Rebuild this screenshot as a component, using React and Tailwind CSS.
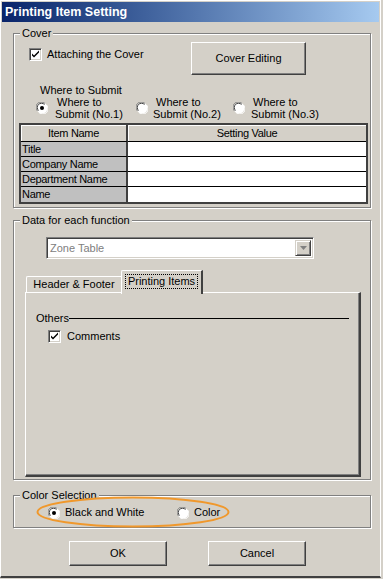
import React from 'react'

function Check({ checked }) {
  return (
    <span className="inline-block w-[13px] h-[13px] bg-white border border-t-[#808080] border-l-[#808080] border-b-white border-r-white shadow-[inset_1px_1px_0_#404040,inset_-1px_-1px_0_#d4d0c8] relative shrink-0">
      {checked && (
        <svg width="13" height="13" viewBox="0 0 13 13" className="absolute left-[-1px] top-[-1px]">
          <path d="M3 5.5 L5 7.5 L10 2.5 L10 4.5 L5 9.5 L3 7.5 Z" fill="#000" />
        </svg>
      )}
    </span>
  )
}

function Radio({ checked }) {
  return (
    <svg width="12" height="12" viewBox="0 0 12 12" className="shrink-0">
      <circle cx="6" cy="6" r="5.5" fill="#fff" />
      <path d="M1.5 9 A5 5 0 0 1 9 1.5" stroke="#808080" strokeWidth="1" fill="none" />
      <path d="M2.5 8.5 A4 4 0 0 1 8.5 2.5" stroke="#404040" strokeWidth="1" fill="none" />
      <path d="M10.5 3 A5 5 0 0 1 3 10.5" stroke="#fff" strokeWidth="1" fill="none" />
      {checked && <circle cx="6" cy="6" r="2" fill="#000" />}
    </svg>
  )
}

function Button({ children, className = '' }) {
  return (
    <div className={`flex items-center justify-center bg-[#d4d0c8] border border-t-white border-l-white border-r-[#404040] border-b-[#404040] shadow-[inset_-1px_-1px_0_#808080] text-[11px] text-black ${className}`}>
      {children}
    </div>
  )
}

function Group({ label, className = '', children }) {
  return (
    <fieldset className={`relative mx-[12px] w-[358px] border border-[#808080] shadow-[inset_1px_1px_0_#fff,1px_1px_0_#fff] ${className}`}>
      <legend className="ml-[6px] px-[2px] bg-[#d4d0c8] leading-[13px] text-[11px]">{label}</legend>
      {children}
    </fieldset>
  )
}

const rows = ['Title', 'Company Name', 'Department Name', 'Name']

export default function App() {
  return (
    <div className="w-[383px] h-[579px] bg-[#d4d0c8] overflow-hidden font-['Liberation_Sans',Arial,sans-serif] text-black">
      <div className="w-[381px] h-[578px] border-l border-l-white border-r border-r-white border-b-2 border-b-[#404040] border-t border-t-white flex flex-col">
        {/* title bar */}
        <div className="mx-[1px] mt-[1px] h-[20px] bg-gradient-to-r from-[#0a246a] to-[#a6caf0] flex items-center pl-[3px]">
          <span className="text-white font-bold text-[12.5px]">Printing Item Setting</span>
        </div>

        {/* Cover */}
        <Group label="Cover" className="mt-[5px] h-[181px]">
          <div className="flex items-start pt-[2px]">
            <label className="w-[177px] pl-[15px] mt-[4px] flex items-center gap-[5px] text-[11px]">
              <Check checked />
              <span>Attaching the Cover</span>
            </label>
            <Button className="w-[115px] h-[33px]">Cover Editing</Button>
          </div>
          <div className="pl-[26px] mt-[9px] text-[11px] leading-[12px]">Where to Submit</div>
          <div className="flex items-center text-[11px] leading-[12px]">
            <div className="ml-[22px] w-[100px] flex items-center gap-[7px]">
              <Radio checked />
              <div><div className="pl-[2px]">Where to</div><div>Submit (No.1)</div></div>
            </div>
            <div className="w-[97px] flex items-center gap-[5px]">
              <Radio />
              <div><div className="pl-[3px]">Where to</div><div>Submit (No.2)</div></div>
            </div>
            <div className="flex items-center gap-[6px]">
              <Radio />
              <div><div className="pl-[2px]">Where to</div><div>Submit (No.3)</div></div>
            </div>
          </div>
          <div className="ml-[5px] mt-[3px] w-[349px] border-2 border-[#404040] grid grid-cols-[107px_1fr] text-[11px] leading-[13px] tracking-[-0.3px]">
            <div className="h-[17px] border-r-2 border-r-[#404040] border-b border-b-black bg-[#d4d0c8] shadow-[inset_1px_1px_0_#fff] flex items-center justify-center">Item Name</div>
            <div className="h-[17px] border-b border-b-black bg-[#d4d0c8] shadow-[inset_1px_1px_0_#fff] flex items-center justify-center">Setting Value</div>
            {rows.map((r, i) => (
              <React.Fragment key={r}>
                <div className={`h-[15px] pl-[1px] bg-[#c0c0c0] border-r-2 border-r-[#404040] flex items-center ${i < 3 ? 'border-b border-b-black' : ''}`}>{r}</div>
                <div className={`h-[15px] bg-white ${i < 3 ? 'border-b border-b-black' : ''}`} />
              </React.Fragment>
            ))}
          </div>
        </Group>

        {/* Data for each function */}
        <Group label="Data for each function" className="mt-[6px] h-[266px]">
          <div className="ml-[32px] mt-[10px] w-[268px] h-[22px] bg-white border border-t-[#808080] border-l-[#808080] border-b-white border-r-white shadow-[inset_1px_1px_0_#404040,inset_-1px_-1px_0_#d4d0c8] flex items-center justify-between pl-[3px] pr-[2px]">
            <span className="text-[11px] text-[#808080]">Zone Table</span>
            <div className="w-[16px] h-[16px] bg-[#d4d0c8] border border-t-[#d4d0c8] border-l-[#d4d0c8] border-r-[#404040] border-b-[#404040] shadow-[inset_1px_1px_0_#fff,inset_-1px_-1px_0_#808080] flex items-center justify-center">
              <svg width="7" height="4" viewBox="0 0 7 4"><path d="M0 0 H7 L3.5 4 Z" fill="#808080" /></svg>
            </div>
          </div>

          <div className="ml-[11px] mt-[11px] w-[336px]">
            <div className="flex items-end pl-[1px] text-[11px]">
              <div className="w-[95px] h-[16px] border-t border-l border-t-white border-l-white rounded-tl-[2px] flex items-center justify-center">Header &amp; Footer</div>
              <div className="relative z-10 -mb-[2px] w-[82px] h-[24px] bg-[#d4d0c8] border-t border-l border-r-2 border-t-white border-l-white border-r-[#404040] rounded-tl-[2px] flex items-start justify-center pt-[3px]">
                <span className="px-[2px] border border-dotted border-black leading-[13px]">Printing Items</span>
              </div>
            </div>
            <div className="h-[185px] border-t border-l border-t-white border-l-white border-r-2 border-b-2 border-r-[#404040] border-b-[#404040] shadow-[inset_-1px_-1px_0_#808080] pt-[19px] text-[11px]">
              <div className="flex items-center pl-[10px] pr-[10px] leading-[13px]">
                <span>Others</span>
                <span className="flex-1 h-px bg-black" />
              </div>
              <label className="mt-[3px] ml-[22px] flex items-center gap-[6px]">
                <Check checked />
                <span>Comments</span>
              </label>
            </div>
          </div>
        </Group>

        {/* Color Selection */}
        <Group label="Color Selection" className="mt-[9px] h-[39px]">
          <div className="flex items-center mt-[4px] text-[11px] leading-[13px]">
            <div className="ml-[34px] w-[129px] flex items-center gap-[5px]">
              <Radio checked />
              <span>Black and White</span>
            </div>
            <div className="flex items-center gap-[5px]">
              <Radio />
              <span>Color</span>
            </div>
          </div>
          <svg className="absolute left-[22px] top-[-6px] pointer-events-none" width="194" height="32" viewBox="0 0 194 32">
            <ellipse cx="97" cy="16" rx="95.5" ry="14.5" fill="none" stroke="#f0982c" strokeWidth="2" />
          </svg>
        </Group>

        <div className="flex pl-[68px] gap-[41px] mt-[13px]">
          <Button className="w-[98px] h-[25px]">OK</Button>
          <Button className="w-[98px] h-[25px]">Cancel</Button>
        </div>
      </div>
    </div>
  )
}
